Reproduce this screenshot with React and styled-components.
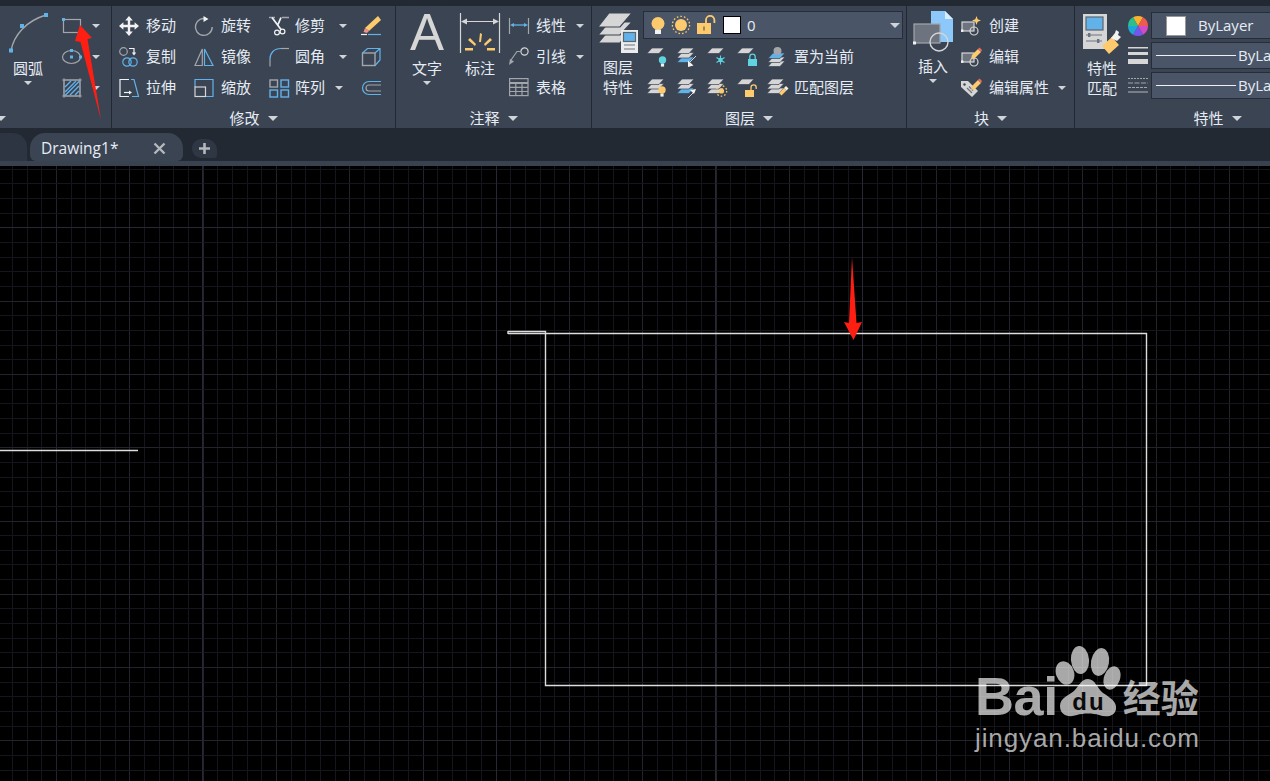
import React from 'react';
import styled, { createGlobalStyle } from 'styled-components';

const GRAY = '#a3a6ab';
const LIGHT = '#d6d6d6';
const BLUE = '#62b2ea';
const ORANGE = '#fdcb6e';
const WHITE = '#f2f2f2';
const CYAN = '#5fd3e0';
const RIBBON = '#3b4453';

const GlobalStyle = createGlobalStyle`
  html, body { margin: 0; padding: 0; height: 100%; overflow: hidden; background: #000; }
  * { box-sizing: border-box; }
  #root { height: 100%; }
`;

const Page = styled.div`
  position: relative;
  height: 100vh;
  display: flex;
  flex-direction: column;
  overflow: hidden;
  font-family: "Open Sans", "Noto Sans CJK SC", sans-serif;
  color: #e6ecf3;
`;

const TopStrip = styled.div`
  height: 6px;
  flex: none;
  background: #222933;
  display: flex;
  overflow: hidden;
`;

const MenuItem = styled.span`
  flex: none;
  margin-left: ${p => p.$gap}px;
  margin-top: -18px;
  font-size: 15px;
  line-height: 21px;
  color: #c9d0d8;
`;

const Ribbon = styled.div`
  height: 122px;
  flex: none;
  display: flex;
  background: ${RIBBON};
  overflow: hidden;
`;

const Panel = styled.section`
  flex: ${p => (p.$w ? `0 0 ${p.$w}px` : '1 1 0')};
  min-width: 0;
  display: flex;
  flex-direction: column;
  overflow: hidden;
  border-right: ${p => (p.$w ? '1px solid #222933' : 'none')};
`;

const PanelBody = styled.div`
  flex: 1;
  display: flex;
  padding-left: ${p => p.$pad || 7}px;
  gap: ${p => p.$gap || 0}px;
  min-height: 0;
`;

const PanelFooter = styled.div`
  flex: 0 0 20px;
  display: flex;
  align-items: center;
  justify-content: ${p => (p.$start ? 'flex-start' : 'center')};
  gap: 8px;
  font-size: 15px;
  line-height: 20px;
  margin-left: ${p => p.$shift || 0}px;
`;

const Caret = styled.i`
  flex: none;
  width: 0;
  height: 0;
  border-left: ${p => (p.$big ? 5 : 4)}px solid transparent;
  border-right: ${p => (p.$big ? 5 : 4)}px solid transparent;
  border-top: ${p => (p.$big ? 5 : 4)}px solid #cfd4da;
  margin-left: ${p => p.$ml || 0}px;
`;

const ToolCol = styled.div`
  flex: ${p => (p.$w ? `0 0 ${p.$w}px` : '0 0 auto')};
  padding-top: 4.5px;
  display: flex;
  flex-direction: column;
`;

const Tool = styled.div`
  height: 31px;
  display: flex;
  align-items: center;
  font-size: 15px;
  white-space: nowrap;
`;

const ToolLabel = styled.span`
  margin-left: ${p => p.$gap || 7}px;
  padding-bottom: 4px;
`;

const BigTool = styled.div`
  flex: 0 0 ${p => p.$w}px;
  padding-top: ${p => p.$top || 7}px;
  display: flex;
  flex-direction: column;
  align-items: center;
  font-size: 15px;
  line-height: 20px;
`;

const BigLabel = styled.span`
  margin-top: ${p => p.$gap ?? 5}px;
`;

const BigCaret = styled(Caret)`
  margin-top: 3px;
`;

const TextGlyph = styled.span`
  height: 40px;
  font-family: "Liberation Sans", sans-serif;
  font-size: 51px;
  line-height: 40px;
  color: ${LIGHT};
`;

const StackCol = styled.div`
  flex: 1;
  padding-top: 5px;
  display: flex;
  flex-direction: column;
`;

const Combo = styled.div`
  height: ${p => p.$h || 27}px;
  width: ${p => p.$w}px;
  flex: none;
  display: flex;
  align-items: center;
  padding-left: ${p => p.$pad || 4}px;
  gap: ${p => p.$gap || 0}px;
  background: #4a5568;
  border: 1px solid #262d39;
  font-size: 15px;
  white-space: nowrap;
`;

const ComboText = styled.span`
  margin-left: ${p => p.$gap || 0}px;
  padding-bottom: 2px;
`;

const Swatch = styled.span`
  flex: none;
  width: ${p => p.$size}px;
  height: ${p => p.$size}px;
  background: #fff;
  border: ${p => (p.$dark ? '1px solid #000' : '1px solid #999')};
`;

const LineSample = styled.span`
  flex: none;
  width: 80px;
  height: 1px;
  margin-right: 2px;
  background: #f0f0f0;
`;

const ComboCaret = styled(Caret)`
  margin-left: auto;
  margin-right: 2px;
`;

const LayerRow = styled.div`
  height: 31px;
  display: flex;
  align-items: center;
  gap: 10px;
  padding-left: 4px;
  font-size: 15px;
`;

const LayerRows = styled.div`
  padding-top: 2.5px;
`;

const LayerLabel = styled.span`
  margin-left: -3px;
  padding-bottom: 4px;
`;

const PropStack = styled.div`
  flex: 1;
  padding: 6px 0 0 6px;
  display: flex;
  flex-direction: column;
  gap: 3px;
`;

const PropRow = styled.div`
  display: flex;
  align-items: center;
  gap: 3px;
`;

const TabBar = styled.div`
  height: 38px;
  flex: none;
  display: flex;
  align-items: flex-end;
  background: #222933;
  border-bottom: 5px solid #39424f;
`;

const TabStub = styled.div`
  width: 27px;
  height: 28px;
  background: #2d3442;
  border-radius: 0 14px 0 0;
`;

const DocTab = styled.div`
  width: 153px;
  height: 28px;
  margin-left: 3px;
  padding: 2px 17px 0 11px;
  display: flex;
  align-items: center;
  justify-content: space-between;
  background: ${RIBBON};
  border-radius: 15px 15px 6px 6px;
  font-size: 15.5px;
`;

const CloseMark = styled.span`
  display: flex;
  color: #b4b8bd;
`;

const PlusTab = styled.div`
  width: 25px;
  height: 19px;
  margin: 0 0 3px 9px;
  display: flex;
  align-items: center;
  justify-content: center;
  background: #2f3744;
  border-radius: 9px 11px 3px 9px;
  color: #b4b8bd;
`;

const Canvas = styled.div`
  position: relative;
  flex: 1;
  min-height: 0;
  background: #000;
`;

const Drawing = styled.svg`
  display: block;
  width: 100%;
  height: 100%;
`;

const ArrowOverlay = styled.svg`
  position: absolute;
  left: 70px;
  top: 20px;
  width: 36px;
  height: 104px;
`;

const Watermark = styled.div`
  position: absolute;
  left: 975px;
  top: 480px;
  width: 240px;
  color: rgba(255, 255, 255, 0.66);
  font-family: "Liberation Sans", "Noto Sans CJK SC", sans-serif;
`;

const BrandRow = styled.div`
  display: flex;
  align-items: flex-end;
  height: 72px;
`;

const BrandText = styled.span`
  font-size: 54px;
  font-weight: 700;
  line-height: 52px;
  margin-bottom: -4px;
  letter-spacing: -0.4px;
`;

const BrandPaw = styled.svg`
  flex: none;
  width: 68px;
  height: 72px;
  margin-left: -5px;
`;

const BrandCn = styled.span`
  font-family: "Noto Sans CJK SC", sans-serif;
  font-size: 38px;
  font-weight: 700;
  line-height: 38px;
  margin: 0 0 3px 2px;
`;

const BrandUrl = styled.div`
  margin-top: 6px;
  font-size: 26px;
  line-height: 28px;
  letter-spacing: 0.9px;
  white-space: nowrap;
`;

const Ico = styled.svg`
  flex: none;
  display: block;
  width: ${p => p.$w || 20}px;
  height: ${p => p.$h || 20}px;
  overflow: visible;
`;

// small icons, all on a 20 box
const I = ({ children, w = 20, h = 20 }) => (
  <Ico $w={w} $h={h} viewBox={`0 0 ${w} ${h}`} fill="none" strokeWidth="1.2">
    {children}
  </Ico>
);

const ArcIcon = () => (
  <I w={40} h={40}>
    <path d="M3 37.5C6 22 18 8 38 2" stroke={GRAY} strokeWidth="1.4" />
    <rect x="1" y="35.5" width="4" height="4" fill={BLUE} />
    <rect x="12" y="11" width="4" height="4" fill={BLUE} />
    <rect x="36" y="0" width="4" height="4" fill={BLUE} />
  </I>
);
const RectIcon = () => (
  <I>
    <rect x="1.5" y="3.5" width="17" height="13" stroke={GRAY} />
    <rect x="0" y="2" width="3" height="3" fill={BLUE} />
  </I>
);
const EllipseIcon = () => (
  <I>
    <ellipse cx="9.5" cy="10" rx="9" ry="6.5" stroke={GRAY} />
    <rect x="8" y="2" width="3" height="3" fill={BLUE} />
    <rect x="8" y="8.5" width="3" height="3" fill={BLUE} />
    <rect x="17" y="8.5" width="3" height="3" fill={BLUE} />
  </I>
);
const HatchIcon = () => (
  <I>
    <rect x="2" y="2" width="16" height="16" stroke={GRAY} />
    <path d="M0 2h20M0 18h20M2 0v20M18 0v20" stroke={GRAY} strokeWidth=".8" />
    <path d="M3 9l6-6M3 14l11-11M3 17.5L17.5 3M8 17l9-9M13 17l4-4" stroke={BLUE} strokeWidth="1.4" />
  </I>
);
const MoveIcon = () => (
  <I>
    <path d="M10 0l3.8 4.4H11.2v4.4h4.4V6.2L20 10l-4.4 3.8v-2.6h-4.4v4.4h2.6L10 20l-3.8-4.4h2.6v-4.4H4.4v2.6L0 10l4.4-3.8v2.6h4.4V4.4H6.2z" fill={WHITE} />
  </I>
);
const RotateIcon = () => (
  <I>
    <path d="M13 3.2A8.4 8.4 0 1 0 18.2 11" stroke={GRAY} strokeWidth="1.4" />
    <path d="M9.5 0l5 3-5 3z" fill={WHITE} />
  </I>
);
const TrimIcon = () => (
  <I>
    <path d="M0 1.5h6M13 1.5h7" stroke={GRAY} strokeWidth="1.4" />
    <path d="M3 1.5l9 12M12 1.5l-3 7" stroke={WHITE} strokeWidth="1.8" />
    <circle cx="8" cy="16.5" r="2.4" stroke={WHITE} strokeWidth="1.2" />
    <circle cx="13.5" cy="15.5" r="2.4" stroke={WHITE} strokeWidth="1.2" />
  </I>
);
const EraseIcon = () => (
  <I>
    <path d="M17 0l3 4L8 15l-4-3z" fill={ORANGE} />
    <path d="M4 12l4 3-2 2-3.5-1z" fill="#f0908a" />
    <path d="M0 18.5h6" stroke={WHITE} />
    <path d="M7 18.5h13" stroke={BLUE} />
  </I>
);
const CopyIcon = () => (
  <I>
    <circle cx="4.5" cy="4.5" r="3.8" stroke={GRAY} />
    <path d="M10 1.5h5v5" stroke={WHITE} />
    <path d="M12.8 5.5l2.2 3 2.2-3z" fill={WHITE} />
    <circle cx="8" cy="15" r="4.2" stroke={BLUE} />
    <circle cx="14" cy="15" r="4.2" stroke={BLUE} />
  </I>
);
const MirrorIcon = () => (
  <I>
    <path d="M8.3 2L1 18.5h7.3z" stroke={GRAY} />
    <path d="M10.5 2L19 18.5h-8.5z" stroke={BLUE} />
  </I>
);
const FilletIcon = () => (
  <I>
    <path d="M1 19.5V12" stroke={GRAY} />
    <path d="M1 12C1 6 5 1.5 12 1.5" stroke={BLUE} />
    <path d="M12 1.5h8" stroke={GRAY} />
  </I>
);
const CubeIcon = () => (
  <I>
    <rect x="1.5" y="6" width="12.5" height="12.5" stroke={GRAY} strokeWidth="1.4" />
    <path d="M1.5 6l5-4.5H19V13l-5 5.5M14 6l5-4.5" stroke={BLUE} />
  </I>
);
const StretchIcon = () => (
  <I>
    <path d="M10 1.5H1v17h9" stroke={WHITE} />
    <path d="M12 1.5h3l4.5 17H13" stroke={BLUE} />
    <path d="M5 14.5h6" stroke={WHITE} />
    <path d="M10 12.5l3 2-3 2z" fill={WHITE} />
  </I>
);
const ScaleIcon = () => (
  <I>
    <path d="M1 9V1.5h18v17h-7" stroke={BLUE} />
    <rect x="1" y="9" width="10.5" height="9.5" stroke={LIGHT} />
  </I>
);
const ArrayIcon = () => (
  <I>
    <rect x="1" y="2" width="7.5" height="7" stroke={GRAY} strokeWidth="1.4" />
    <rect x="12" y="2" width="7.5" height="7" stroke={BLUE} strokeWidth="1.4" />
    <rect x="1" y="12" width="7.5" height="7" stroke={BLUE} strokeWidth="1.4" />
    <rect x="12" y="12" width="7.5" height="7" stroke={BLUE} strokeWidth="1.4" />
  </I>
);
const OffsetIcon = () => (
  <I>
    <path d="M20 3.5H8a6.5 6.5 0 0 0 0 13h12" stroke={BLUE} />
    <path d="M20 7H8a3 3 0 0 0 0 6h12" stroke={GRAY} />
  </I>
);
const DimLineIcon = () => (
  <I>
    <path d="M.5 2v16M19.5 2v16" stroke={GRAY} />
    <path d="M3 9h14" stroke={BLUE} strokeWidth="1.3" />
    <path d="M1 9l4-2v4zM19 9l-4-2v4z" fill={BLUE} />
  </I>
);
const LeaderIcon = () => (
  <I>
    <circle cx="15.5" cy="4.5" r="3.6" stroke={LIGHT} />
    <path d="M12 4.5H8L2 13" stroke={GRAY} />
    <path d="M0 18l1-6 4 2.5z" fill={GRAY} />
  </I>
);
const TableIcon = () => (
  <I>
    <rect x=".6" y=".6" width="18.4" height="17" stroke={GRAY} />
    <path d="M.6 5h18.4" stroke={GRAY} strokeWidth="2" />
    <path d="M.6 9.3h18.4M.6 13.5h18.4M6.8 5v12.6M13 5v12.6" stroke={GRAY} />
  </I>
);
const DimensionIcon = () => (
  <I w={40} h={40}>
    <path d="M.5 0v40M39.5 0v40" stroke={LIGHT} />
    <path d="M3 8.5h34" stroke={LIGHT} />
    <path d="M1 8.5l6-3v6zM39 8.5l-6-3v6z" fill={LIGHT} />
    <path d="M20 20l2 1-1 8-2 0zM8 27l2-2 6 6-1 2zM32 27l-2-2-6 6 1 2zM5 35h8v2.4H5zM27 35h8v2.4h-8z" fill={ORANGE} />
  </I>
);

const Sheet = ({ x = 0, y = 0, fill = LIGHT }) => (
  <path d={`M${x} ${y + 5.5}L${x + 5} ${y}H${x + 17}L${x + 12} ${y + 5.5}Z`} fill={fill} stroke={RIBBON} strokeWidth=".7" />
);
const Stack = ({ blue }) => (
  <>
    <Sheet x={0} y={10} fill={blue ? BLUE : LIGHT} />
    <Sheet x={0} y={5.5} />
    <Sheet x={0} y={1} />
  </>
);
const Bulb = ({ x, y, fill }) => (
  <>
    <circle cx={x} cy={y} r="3.7" fill={fill} />
    <rect x={x - 1.6} y={y + 3.6} width="3.2" height="3" fill={WHITE} />
  </>
);
const Padlock = ({ x, y, fill, open }) => (
  <>
    <rect x={x} y={y + 5} width="9" height="7" fill={fill} />
    <path
      d={open ? `M${x + 6} ${y + 5}V${y + 2.5}a2.6 2.6 0 0 1 5.2 0V${y + 4}` : `M${x + 1.8} ${y + 5}V${y + 2.8}a2.7 2.7 0 0 1 5.4 0V${y + 5}`}
      stroke={fill}
      strokeWidth="1.3"
    />
  </>
);
const Sun = ({ x, y, r = 3.6 }) => (
  <>
    <circle cx={x} cy={y} r={r} fill={ORANGE} />
    <circle cx={x} cy={y} r={r + 2.6} stroke={ORANGE} strokeWidth="1.3" strokeDasharray="1.6 2" />
  </>
);
const CornerArrow = ({ up }) => (
  <>
    <path d={up ? 'M11 20l7-7' : 'M19 9l-6 6'} stroke={LIGHT} strokeWidth="1" />
    <path d={up ? 'M19 11l-6 1 4 4z' : 'M11 20v-6.5l5.5 5z'} fill={WHITE} />
  </>
);
const LayerOffIcon = () => <I><Sheet x={0} y={1} /><Bulb x={15.5} y={13} fill={CYAN} /></I>;
const LayerIsoIcon = () => <I><Stack blue /><CornerArrow /></I>;
const LayerFreezeIcon = () => (
  <I>
    <Sheet x={0} y={1} />
    <path d="M13.5 8.5v9M9.5 10.5l8 5M17.5 10.5l-8 5" stroke={CYAN} strokeWidth="1.1" />
    <circle cx="13.5" cy="13" r="1.6" stroke={CYAN} />
  </I>
);
const LayerLockIcon = () => <I><Sheet x={0} y={1} /><Padlock x={11} y={7} fill={CYAN} /></I>;
const LayerCurrentIcon = () => (
  <I>
    <Sheet x={1} y={14} />
    <Sheet x={1} y={10} />
    <Sheet x={1} y={6} fill={BLUE} />
    <circle cx="10.5" cy="4" r="4" fill={GRAY} />
  </I>
);
const LayerOnIcon = () => <I><Stack /><Bulb x={15} y={12} fill={ORANGE} /></I>;
const LayerUnisoIcon = () => <I><Stack blue /><CornerArrow up /></I>;
const LayerThawIcon = () => <I><Stack /><Sun x={14.5} y={13} r={2.6} /></I>;
const LayerUnlockIcon = () => <I><Sheet x={0} y={1} /><Padlock x={8} y={7} fill={ORANGE} open /></I>;
const LayerMatchIcon = () => (
  <I>
    <Stack />
    <path d="M12 15l5-5 2.5 2.5-5 5z" fill={ORANGE} />
    <path d="M17 10l2-2 2.5 2.5-2 2z" fill={WHITE} />
  </I>
);

const LayerPropsIcon = () => (
  <I w={40} h={40}>
    <path d="M0 30L11 17H34L22 30z" fill={LIGHT} stroke={RIBBON} />
    <path d="M0 22L11 9H34L22 22z" fill={LIGHT} stroke={RIBBON} />
    <path d="M0 14L11 0H34L22 14z" fill={LIGHT} stroke={RIBBON} />
    <rect x="23" y="17" width="17" height="23" fill="#ececec" />
    <rect x="25.5" y="19.5" width="12" height="9" fill={BLUE} stroke="#5c6570" />
    <path d="M26 32h11M26 36h11" stroke="#6b7280" />
  </I>
);
const InsertIcon = () => (
  <I w={40} h={41}>
    <path d="M18 0h14l8 8v23H18z" fill="#8cc9fa" />
    <path d="M32 0v8h8z" fill="#d9eefc" />
    <rect x="1" y="13" width="26" height="19" fill="#6d7480" stroke={GRAY} />
    <circle cx="26" cy="31" r="9" stroke={LIGHT} strokeWidth="1.4" />
    <rect x="0" y="30.5" width="3" height="3" fill={WHITE} />
  </I>
);
const BlockBase = () => (
  <>
    <rect x="1" y="6" width="12" height="9" fill="#6d7480" stroke={LIGHT} />
    <circle cx="13" cy="15" r="4" stroke={LIGHT} fill="none" />
    <rect x="0" y="13.5" width="2.4" height="2.4" fill={WHITE} />
  </>
);
const BlockNewIcon = () => (
  <I>
    <BlockBase />
    <path d="M15.5 0l1.2 3.3L20 4.5l-3.3 1.2-1.2 3.3-1.2-3.3L11 4.5l3.3-1.2z" fill={ORANGE} />
  </I>
);
const Pencil = () => (
  <>
    <path d="M11 8l6-6 3 3-6 6-4 1z" fill={ORANGE} />
    <path d="M17 2l1.5-1.5 2.5 2.5L20 5z" fill="#ee6b62" />
  </>
);
const BlockEditIcon = () => <I><BlockBase /><Pencil /></I>;
const AttrEditIcon = () => (
  <I>
    <path d="M0 3h7l10 10-6 6L0 9z" fill={LIGHT} />
    <circle cx="3.5" cy="6.5" r="1.2" fill={RIBBON} />
    <path d="M6 10l5 5M8 8.5l4 4" stroke="#6b7280" />
    <Pencil />
  </I>
);
const MatchIcon = () => (
  <I w={40} h={43}>
    <rect x="1" y="1" width="24" height="35" fill={LIGHT} />
    <rect x="4" y="4" width="17" height="13" fill={BLUE} stroke="#5c6570" />
    <path d="M4 22h16M4 28h16" stroke="#6b7280" />
    <rect x="6" y="20" width="2.4" height="4" fill="#6b7280" />
    <rect x="15" y="26" width="2.4" height="4" fill="#6b7280" />
    <path d="M20 33l10-9 7 8-10 9z" fill={ORANGE} />
    <path d="M29 25l4-5 1-3 3 2-1 3 3 2-3 3-1 1z" fill={WHITE} />
  </I>
);

const wedge = (from, to, r = 10) => {
  const p = a => `${10 + r * Math.sin((a * Math.PI) / 180)} ${10 - r * Math.cos((a * Math.PI) / 180)}`;
  return `M10 10L${p(from)}A${r} ${r} 0 0 1 ${p(to)}Z`;
};
const wheel = ['#fbb22f', '#ef5b4f', '#d14cc4', '#7456ea', '#1fa6d6', '#2bbf8c'];
const WheelIcon = () => (
  <I>
    {wheel.map((c, i) => (
      <path key={c} d={wedge(i * 60 - 30, i * 60 + 30)} fill={c} />
    ))}
  </I>
);
const WeightIcon = () => (
  <I>
    <rect x="0" y="1" width="20" height="1.5" fill={LIGHT} />
    <rect x="0" y="6" width="20" height="3" fill={LIGHT} />
    <rect x="0" y="13" width="20" height="5" fill={LIGHT} />
  </I>
);
const LinetypeIcon = () => (
  <I>
    <path d="M0 2.5h20" stroke={GRAY} strokeDasharray="2 1" />
    <path d="M0 7h20" stroke={GRAY} strokeDasharray="5 1.5" />
    <path d="M0 11.5h20" stroke={GRAY} strokeDasharray="3 1" />
    <path d="M0 16h20" stroke={GRAY} />
  </I>
);
const BulbLarge = () => (
  <I w={14} h={17}>
    <circle cx="7" cy="6.5" r="6.5" fill={ORANGE} />
    <rect x="4" y="12.5" width="6" height="4.5" fill={WHITE} />
  </I>
);
const SunLarge = () => <I><Sun x={10} y={10} r={6} /></I>;
const LockLarge = () => (
  <I h={18}>
    <rect x="0" y="7" width="14" height="11" fill={ORANGE} />
    <path d="M9 7V4a4.2 4.2 0 0 1 8.4 0v3" stroke={ORANGE} strokeWidth="1.8" />
    <rect x="6.3" y="10.5" width="1.4" height="4" fill="#7a6a3f" />
  </I>
);
const CloseIcon = () => (
  <I w={13} h={13}>
    <path d="M1.5 1.5l10 10M11.5 1.5l-10 10" stroke="currentColor" strokeWidth="2.4" />
  </I>
);
const PlusIcon = () => (
  <I w={11} h={11}>
    <path d="M5.5 0v11M0 5.5h11" stroke="currentColor" strokeWidth="2.6" />
  </I>
);

const Scale = () => {
  const minors = [];
  for (let k = -4; k < 90; k++) {
    const x = 56 + k * 14.66;
    const major = k % 5 === 0;
    minors.push(
      <line key={`v${k}`} x1={Math.round(x)} x2={Math.round(x)} y1="166" y2="781" stroke={major ? '#22232d' : '#15161d'} />
    );
  }
  for (let k = -4; k < 40; k++) {
    const y = 227.3 + k * 14.66;
    const major = k % 5 === 0;
    minors.push(
      <line key={`h${k}`} y1={Math.round(y) + 0.5} y2={Math.round(y) + 0.5} x1="0" x2="1270" stroke={major ? '#22232d' : '#15161d'} />
    );
  }
  ;[202, 496, 715, 862].forEach(x =>
    minors.push(<line key={`s${x}`} x1={x} x2={x} y1="166" y2="781" stroke="#272833" />)
  );
  minors.push(<line key="s-h" x1="0" x2="1270" y1="227.5" y2="227.5" stroke="#272833" />);
  return <g shapeRendering="crispEdges">{minors}</g>;
};

const App = () => (
  <Page>
    <GlobalStyle />
    <TopStrip>
      <MenuItem $gap={20}>默认</MenuItem>
      <MenuItem $gap={46}>插入</MenuItem>
      <MenuItem $gap={24}>注释</MenuItem>
      <MenuItem $gap={23}>视图</MenuItem>
      <MenuItem $gap={24}>附加模块</MenuItem>
      <MenuItem $gap={23}>协作</MenuItem>
      <MenuItem $gap={27}>精选应用</MenuItem>
    </TopStrip>

    <Ribbon>
      <Panel $w={112}>
        <PanelBody $pad={4} $gap={10}>
          <BigTool $w={48}>
            <ArcIcon />
            <BigLabel>圆弧</BigLabel>
            <BigCaret />
          </BigTool>
          <ToolCol>
            <Tool><RectIcon /><Caret $ml={10} /></Tool>
            <Tool><EllipseIcon /><Caret $ml={10} /></Tool>
            <Tool><HatchIcon /><Caret $ml={10} /></Tool>
          </ToolCol>
        </PanelBody>
        <PanelFooter $start $shift={-4}><Caret $big /></PanelFooter>
      </Panel>

      <Panel $w={284}>
        <PanelBody>
          <ToolCol $w={75}>
            <Tool><MoveIcon /><ToolLabel>移动</ToolLabel></Tool>
            <Tool><CopyIcon /><ToolLabel>复制</ToolLabel></Tool>
            <Tool><StretchIcon /><ToolLabel>拉伸</ToolLabel></Tool>
          </ToolCol>
          <ToolCol $w={75}>
            <Tool><RotateIcon /><ToolLabel>旋转</ToolLabel></Tool>
            <Tool><MirrorIcon /><ToolLabel>镜像</ToolLabel></Tool>
            <Tool><ScaleIcon /><ToolLabel>缩放</ToolLabel></Tool>
          </ToolCol>
          <ToolCol $w={92}>
            <Tool><TrimIcon /><ToolLabel $gap={6}>修剪</ToolLabel><Caret $ml={14} /></Tool>
            <Tool><FilletIcon /><ToolLabel $gap={6}>圆角</ToolLabel><Caret $ml={14} /></Tool>
            <Tool><ArrayIcon /><ToolLabel $gap={6}>阵列</ToolLabel><Caret $ml={10} /></Tool>
          </ToolCol>
          <ToolCol>
            <Tool><EraseIcon /></Tool>
            <Tool><CubeIcon /></Tool>
            <Tool><OffsetIcon /></Tool>
          </ToolCol>
        </PanelBody>
        <PanelFooter>修改<Caret $big /></PanelFooter>
      </Panel>

      <Panel $w={196}>
        <PanelBody $gap={5}>
          <BigTool $w={48}>
            <TextGlyph>A</TextGlyph>
            <BigLabel>文字</BigLabel>
            <BigCaret />
          </BigTool>
          <BigTool $w={48}>
            <DimensionIcon />
            <BigLabel>标注</BigLabel>
          </BigTool>
          <ToolCol>
            <Tool><DimLineIcon /><ToolLabel>线性</ToolLabel><Caret $ml={10} /></Tool>
            <Tool><LeaderIcon /><ToolLabel>引线</ToolLabel><Caret $ml={10} /></Tool>
            <Tool><TableIcon /><ToolLabel>表格</ToolLabel></Tool>
          </ToolCol>
        </PanelBody>
        <PanelFooter>注释<Caret $big /></PanelFooter>
      </Panel>

      <Panel $w={315}>
        <PanelBody $pad={6} $gap={5}>
          <BigTool $w={40}>
            <LayerPropsIcon />
            <BigLabel $gap={4}>图层</BigLabel>
            <span>特性</span>
          </BigTool>
          <StackCol>
            <Combo $w={260} $h={28} $pad={7} $gap={6}>
              <BulbLarge />
              <SunLarge />
              <LockLarge />
              <Swatch $size={18} $dark />
              <span>0</span>
              <ComboCaret $big />
            </Combo>
            <LayerRows>
              <LayerRow>
                <LayerOffIcon /><LayerIsoIcon /><LayerFreezeIcon /><LayerLockIcon /><LayerCurrentIcon />
                <LayerLabel>置为当前</LayerLabel>
              </LayerRow>
              <LayerRow>
                <LayerOnIcon /><LayerUnisoIcon /><LayerThawIcon /><LayerUnlockIcon /><LayerMatchIcon />
                <LayerLabel>匹配图层</LayerLabel>
              </LayerRow>
            </LayerRows>
          </StackCol>
        </PanelBody>
        <PanelFooter>图层<Caret $big /></PanelFooter>
      </Panel>

      <Panel $w={168}>
        <PanelBody $pad={6} $gap={8}>
          <BigTool $w={40} $top={5}>
            <InsertIcon />
            <BigLabel $gap={4}>插入</BigLabel>
            <BigCaret />
          </BigTool>
          <ToolCol>
            <Tool><BlockNewIcon /><ToolLabel $gap={8}>创建</ToolLabel></Tool>
            <Tool><BlockEditIcon /><ToolLabel $gap={8}>编辑</ToolLabel></Tool>
            <Tool><AttrEditIcon /><ToolLabel $gap={8}>编辑属性</ToolLabel><Caret $ml={9} /></Tool>
          </ToolCol>
        </PanelBody>
        <PanelFooter>块<Caret $big /></PanelFooter>
      </Panel>

      <Panel>
        <PanelBody>
          <BigTool $w={40}>
            <MatchIcon />
            <BigLabel $gap={2}>特性</BigLabel>
            <span>匹配</span>
          </BigTool>
          <PropStack>
            <PropRow>
              <WheelIcon />
              <Combo $w={200} $pad={14}>
                <Swatch $size={20} />
                <ComboText $gap={12}>ByLayer</ComboText>
              </Combo>
            </PropRow>
            <PropRow>
              <WeightIcon />
              <Combo $w={200}><LineSample /><ComboText>ByLayer</ComboText></Combo>
            </PropRow>
            <PropRow>
              <LinetypeIcon />
              <Combo $w={200}><LineSample /><ComboText>ByLayer</ComboText></Combo>
            </PropRow>
          </PropStack>
        </PanelBody>
        <PanelFooter $shift={90}>特性<Caret $big /></PanelFooter>
      </Panel>
    </Ribbon>

    <TabBar>
      <TabStub />
      <DocTab>
        Drawing1*
        <CloseMark><CloseIcon /></CloseMark>
      </DocTab>
      <PlusTab><PlusIcon /></PlusTab>
    </TabBar>

    <Canvas>
      <Drawing viewBox="0 166 1270 615" preserveAspectRatio="xMinYMin slice">
        <Scale />
        <g stroke="#dcdcdc" fill="none" strokeWidth="1.4">
          <path d="M0 450.5H138" />
          <path d="M508 331.5H545.5V685.5H1146.5V333.5H545.5" />
          <path d="M508 333.5H545" />
          <path d="M508 331V334" />
        </g>
        <path d="M852 257L856.5 323 862 322 853.5 340 844 322 849 323Z" fill="#ff1f12" />
      </Drawing>
      <Watermark>
        <BrandRow>
          <BrandText>Bai</BrandText>
          <BrandPaw viewBox="0 0 68 72">
            <g fill="currentColor">
              <ellipse cx="12" cy="27" rx="9" ry="12" transform="rotate(-20 12 27)" />
              <ellipse cx="27" cy="14" rx="9" ry="14" transform="rotate(-5 27 14)" />
              <ellipse cx="47" cy="16" rx="9" ry="14" transform="rotate(10 47 16)" />
              <ellipse cx="59" cy="32" rx="8" ry="12" transform="rotate(20 59 32)" />
              <path d="M35 33C42 33 44 42 50 47C58 52 64 56 63 63C62 70 54 72 46 69C40 67 30 67 24 69C15 72 7 69 7 60C7 52 16 49 21 45C26 40 28 33 35 33Z" />
            </g>
            <text x="36" y="64" textAnchor="middle" fontFamily="Liberation Sans" fontWeight="700" fontSize="24" letterSpacing="2" fill="#0b0b0b">du</text>
          </BrandPaw>
          <BrandCn>经验</BrandCn>
        </BrandRow>
        <BrandUrl>jingyan.baidu.com</BrandUrl>
      </Watermark>
    </Canvas>

    <ArrowOverlay viewBox="70 20 36 104">
      <path d="M80 25L92 38 87.5 39 101 120 80.5 42 75 41Z" fill="#ff1f12" />
    </ArrowOverlay>
  </Page>
);

export default App;
